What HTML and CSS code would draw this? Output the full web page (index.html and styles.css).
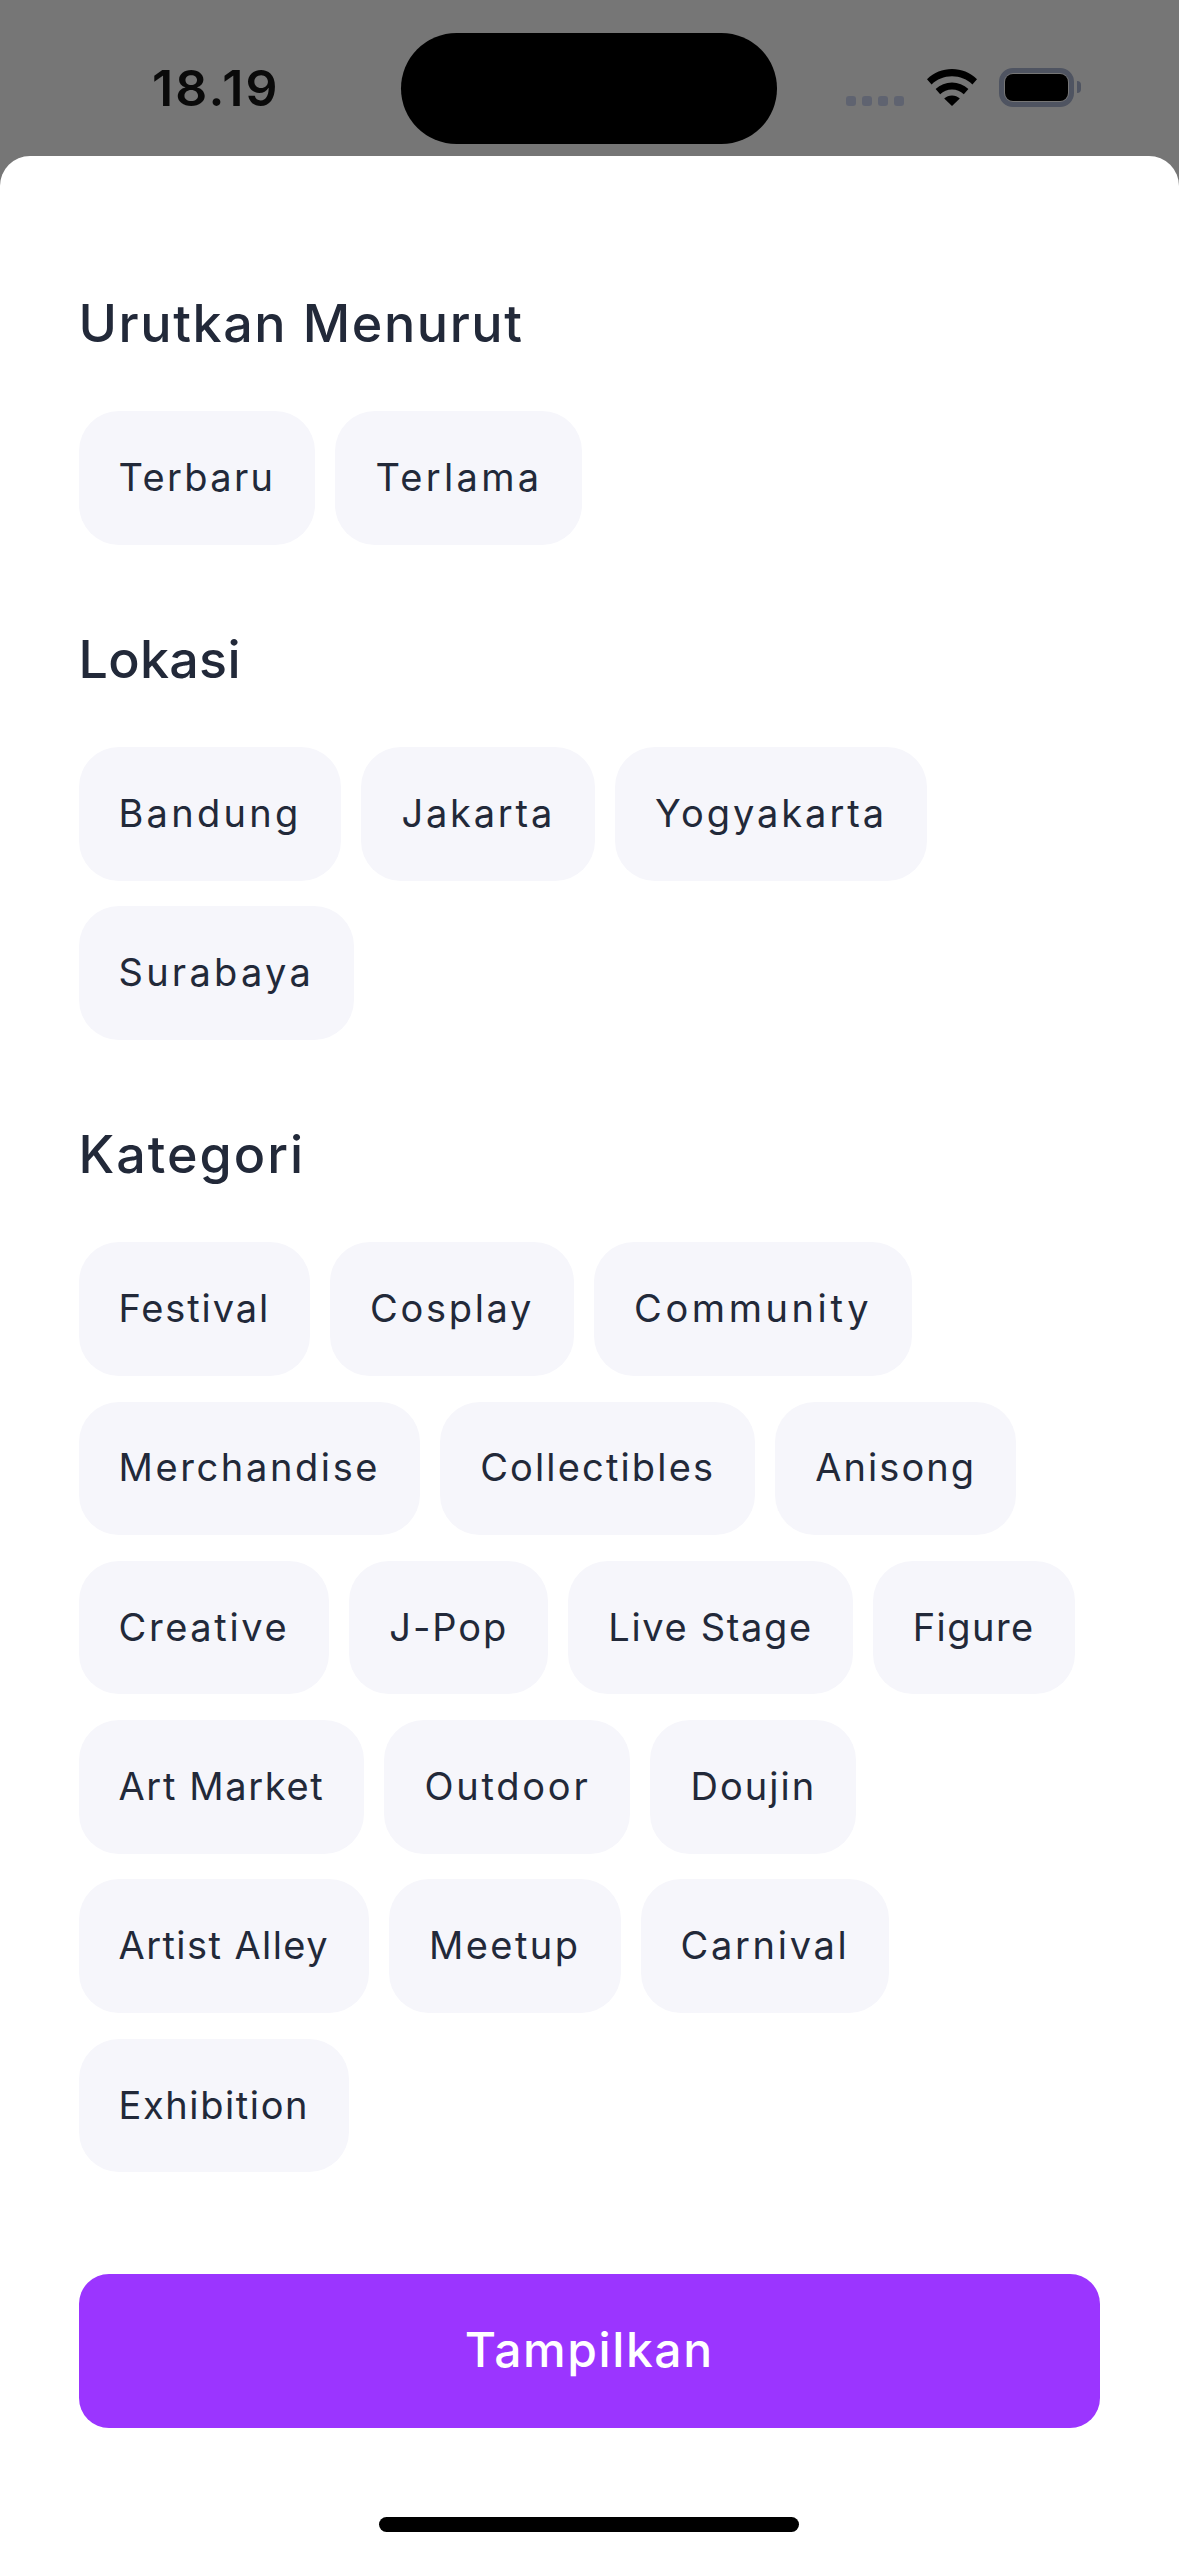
FILE: index.html
```html
<!DOCTYPE html>
<html lang="id">
<head>
<meta charset="utf-8">
<title>Filter</title>
<link rel="stylesheet" href="styles.css">
</head>
<body>
<div class="screen">
  <header class="status">
    <div class="status-left"><span class="time">18.19</span></div>
    <div class="island"></div>
    <div class="status-right">
      <div class="signal"><i></i><i></i><i></i><i></i></div>
      <svg class="wifi" viewBox="0 0 50 37" width="50" height="37" aria-hidden="true">
        <path d="M25 0C15.5 0 7 3.6 0 10.2L4.6 15.4C10 10.2 17 7.2 25 7.2S40 10.2 45.4 15.4L50 10.2C43 3.6 34.5 0 25 0Z"/>
        <path d="M25 13.5C18.8 13.5 13.2 15.9 8.6 20L13.2 25.2C16.4 22.4 20.4 20.6 25 20.6S33.6 22.4 36.8 25.2L41.4 20C36.8 15.9 31.2 13.5 25 13.5Z"/>
        <path d="M25 26.5C22 26.5 19.4 27.6 17.2 29.4L25 37L32.8 29.4C30.6 27.6 28 26.5 25 26.5Z"/>
      </svg>
      <div class="battery"><div class="battery-fill"></div></div>
      <div class="battery-tip"></div>
    </div>
  </header>
  <main class="sheet">
    <section class="group">
      <h2 class="title title-sort">Urutkan Menurut</h2>
      <div class="chips">
        <span class="chip terbaru">Terbaru</span><span class="chip terlama">Terlama</span>
      </div>
    </section>
    <section class="group">
      <h2 class="title title-location">Lokasi</h2>
      <div class="chips">
        <span class="chip bandung">Bandung</span><span class="chip jakarta">Jakarta</span><span class="chip yogyakarta">Yogyakarta</span><span class="chip surabaya">Surabaya</span>
      </div>
    </section>
    <section class="group group-last">
      <h2 class="title title-category">Kategori</h2>
      <div class="chips">
        <span class="chip festival">Festival</span><span class="chip cosplay">Cosplay</span><span class="chip community">Community</span>
        <span class="chip merchandise">Merchandise</span><span class="chip collectibles">Collectibles</span><span class="chip anisong">Anisong</span>
        <span class="chip creative">Creative</span><span class="chip jpop">J-Pop</span><span class="chip livestage">Live Stage</span><span class="chip figure">Figure</span>
        <span class="chip artmarket">Art Market</span><span class="chip outdoor">Outdoor</span><span class="chip doujin">Doujin</span>
        <span class="chip artistalley">Artist Alley</span><span class="chip meetup">Meetup</span><span class="chip carnival">Carnival</span>
        <span class="chip exhibition">Exhibition</span>
      </div>
    </section>
    <button class="cta" type="button">Tampilkan</button>
    <div class="home"></div>
  </main>
</div>
</body>
</html>
```
FILE: styles.css
```css
* { box-sizing: border-box; }
html, body { margin: 0; padding: 0; }
body { background: #767676; font-family: "Inter", "Noto Sans", sans-serif; }
.screen { width: 1179px; height: 2556px; display: flex; flex-direction: column; overflow: hidden; }

.status { height: 156px; flex: none; display: flex; align-items: flex-start; padding-top: 33px; }
.status-left { width: 401px; padding-left: 152px; padding-top: 25px; flex: none; }
.time { font-weight: 600; font-size: 50px; line-height: 60px; color: #0a0a0a; letter-spacing: 2.2px; }
.island { width: 376px; height: 111px; background: #000; border-radius: 56px; flex: none; }
.status-right { display: flex; align-items: flex-start; padding-left: 69px; padding-top: 35px; }
.signal { display: flex; gap: 6px; margin-top: 28px; }
.signal i { display: block; width: 10px; height: 10px; border-radius: 3px; background: #5f6370; }
.wifi { display: block; fill: #000; margin-left: 23px; margin-top: 1px; flex: none; }
.battery { width: 75px; height: 39px; margin-left: 22px; border: 5px solid #4f5461; border-radius: 14px; padding: 1px; }
.battery-fill { width: 100%; height: 100%; background: #000; border-radius: 8px; }
.battery-tip { width: 4px; height: 12px; margin-left: 3px; margin-top: 13px; background: #4f5461; border-radius: 0 6px 6px 0; }

.sheet { flex: 1; background: #fff; border-radius: 30px 30px 0 0; padding: 138px 79px 0 78.5px; display: flex; flex-direction: column; }
.group { margin-bottom: 85.5px; }
.group-last { margin-bottom: 101.5px; }
.title { margin: 0 0 57px; font-weight: 500; font-size: 52px; line-height: 60px; color: #222939; }
.title-sort { letter-spacing: 1.6px; }
.title-location { letter-spacing: 0.3px; }
.title-category { letter-spacing: 2px; }

.chips { display: flex; flex-wrap: wrap; gap: 25.8px 20px; }
.chip { height: 133.5px; padding: 0 40px 2px; background: #f6f6fb; border-radius: 40px; display: flex; align-items: center; font-weight: 400; font-size: 38px; color: #222939; white-space: nowrap; }
.terbaru { letter-spacing: 2.37px; }
.terlama { letter-spacing: 3.31px; }
.bandung { letter-spacing: 3.26px; }
.jakarta { letter-spacing: 2.79px; }
.yogyakarta { letter-spacing: 2.95px; }
.surabaya { letter-spacing: 3.26px; }
.festival { letter-spacing: 1.88px; }
.cosplay { letter-spacing: 2.69px; }
.community { letter-spacing: 3.58px; }
.merchandise { letter-spacing: 2.62px; }
.collectibles { letter-spacing: 2.16px; }
.anisong { letter-spacing: 2.07px; }
.creative { letter-spacing: 2.63px; }
.jpop { letter-spacing: 1.94px; }
.livestage { letter-spacing: 1.65px; }
.figure { letter-spacing: 1.45px; }
.artmarket { letter-spacing: 1.65px; }
.outdoor { letter-spacing: 2.76px; }
.doujin { letter-spacing: 2.02px; }
.artistalley { letter-spacing: 1.43px; }
.meetup { letter-spacing: 2.45px; }
.carnival { letter-spacing: 2.7px; }
.exhibition { letter-spacing: 1.6px; }

.cta { width: 100%; height: 154px; flex: none; border: 0; border-radius: 30px; background: #9b35ff; color: #fff; font-family: inherit; font-weight: 500; font-size: 48px; letter-spacing: 1.6px; padding: 0 0 2px; }
.home { width: 420px; height: 15px; flex: none; margin: 89px auto 0; background: #000; border-radius: 8px; }
```
